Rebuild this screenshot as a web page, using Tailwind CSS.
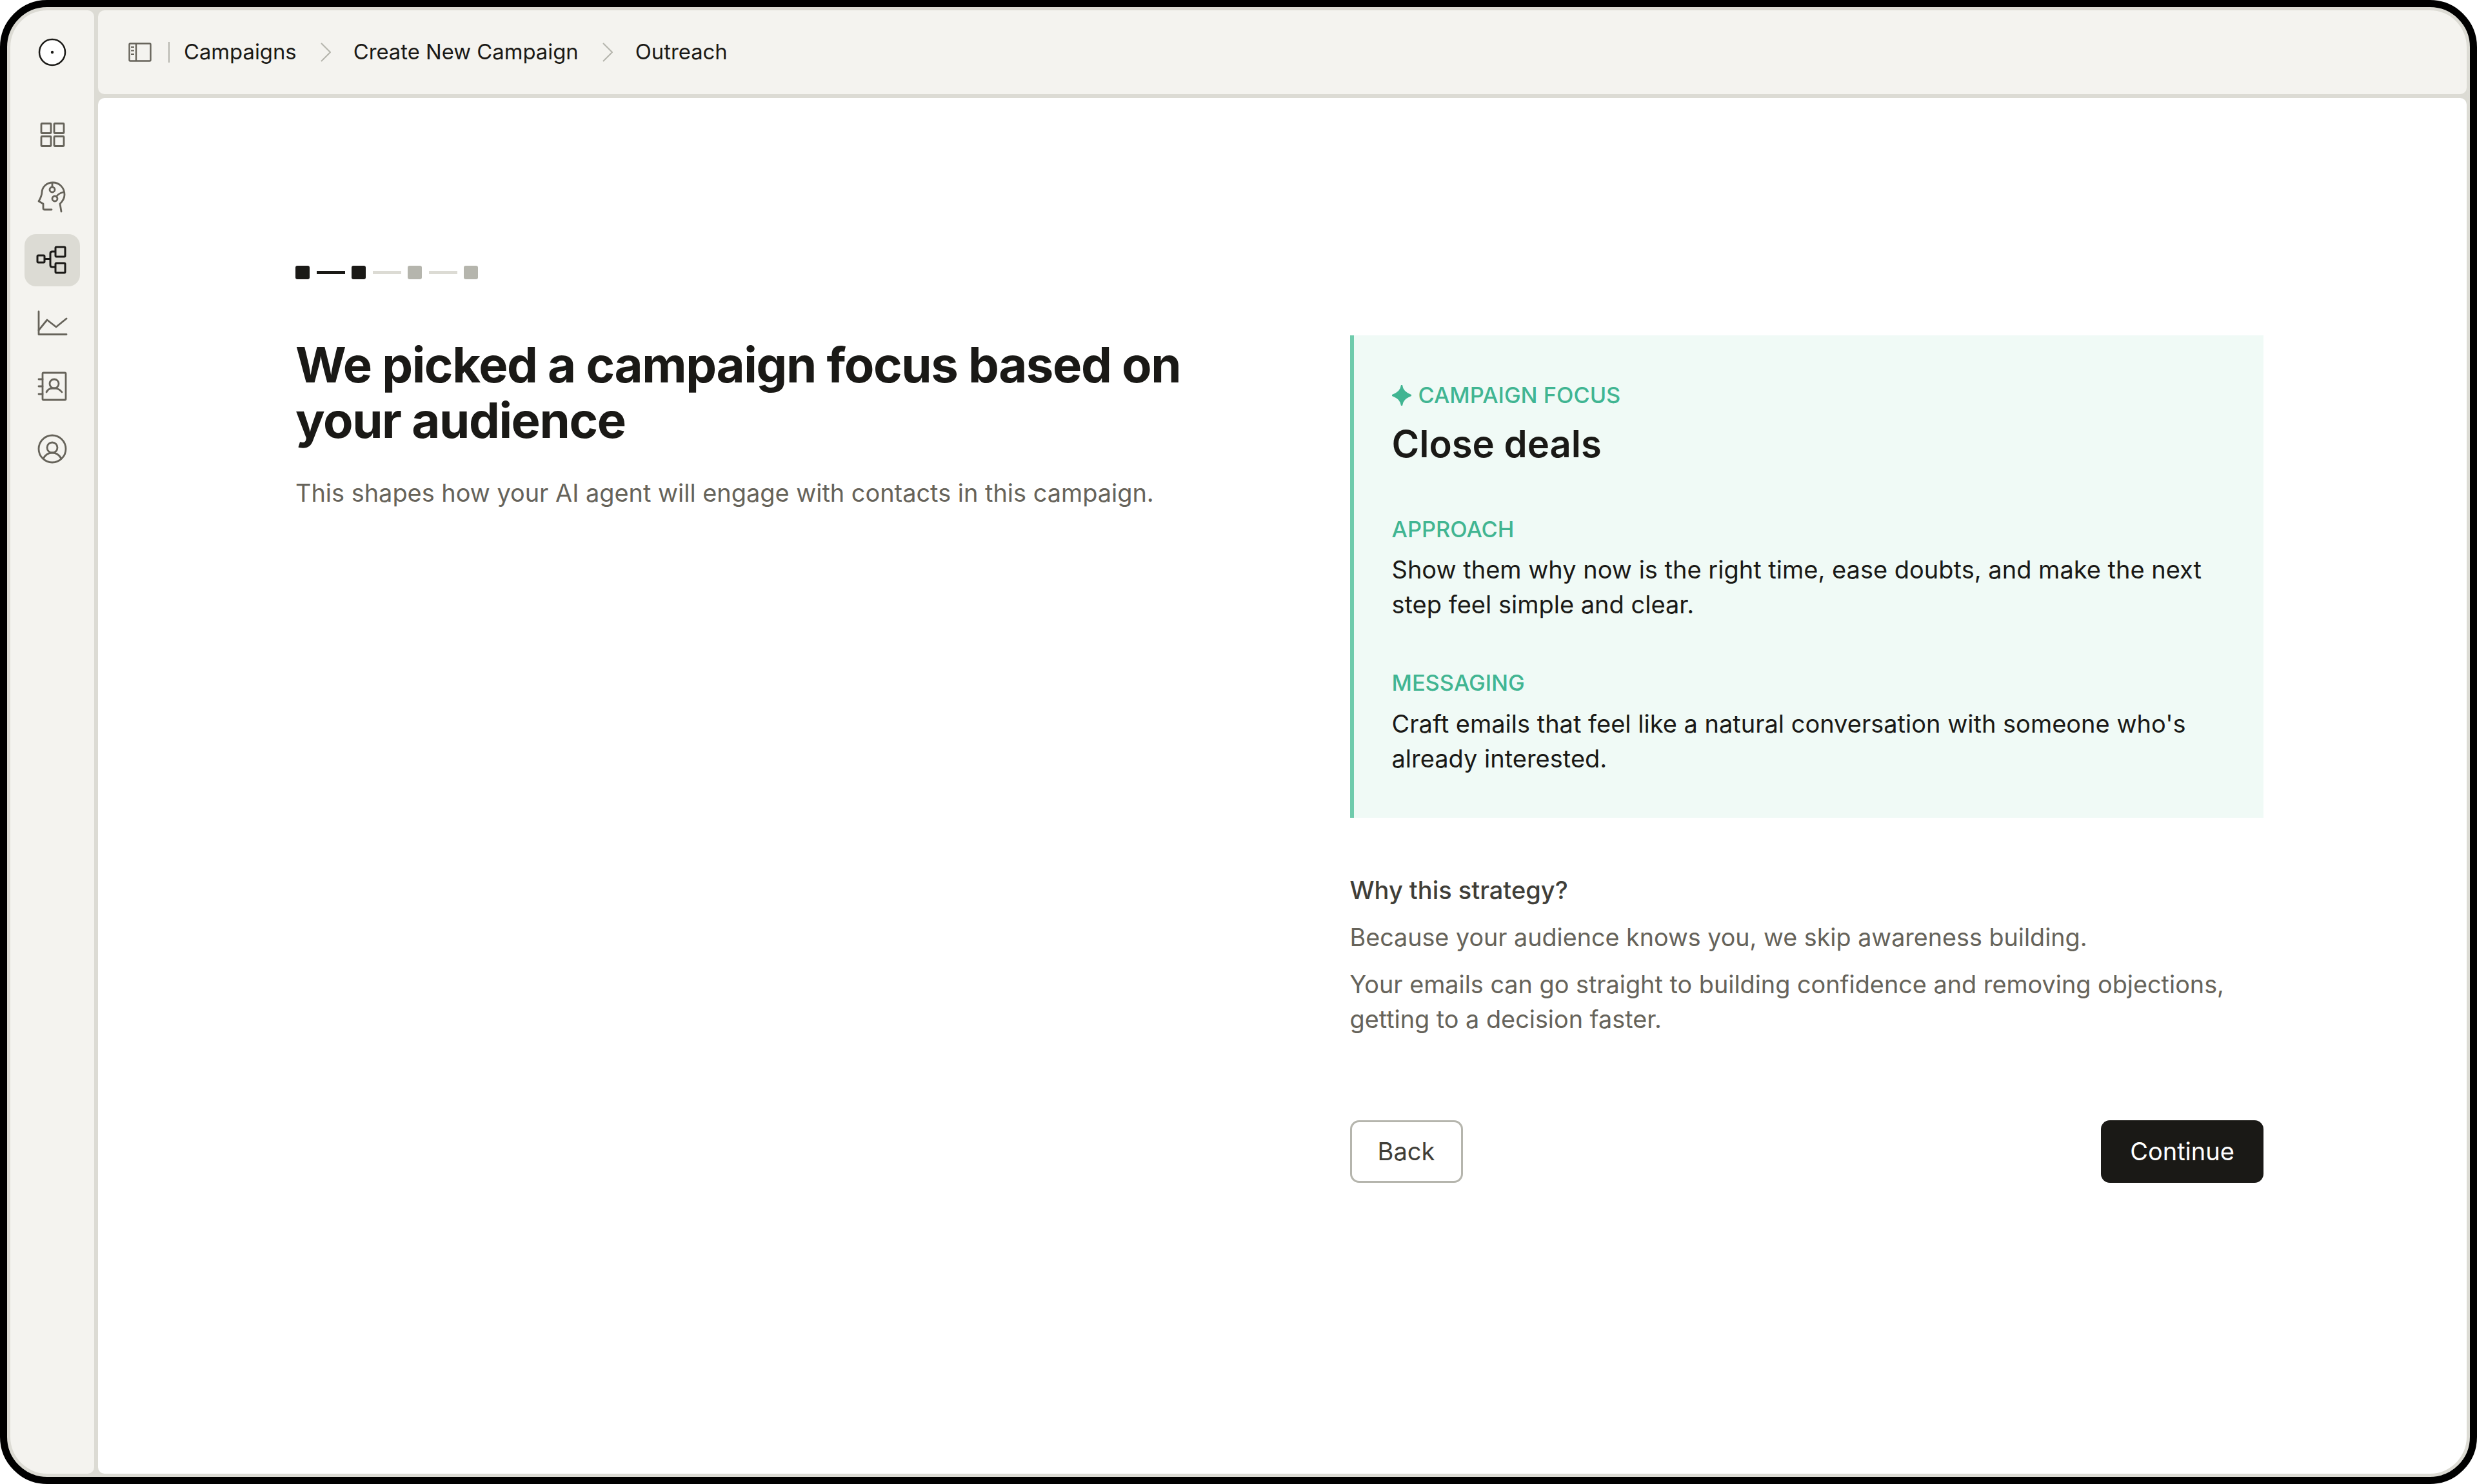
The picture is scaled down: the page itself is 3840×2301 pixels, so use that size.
<!DOCTYPE html>
<html lang="en">
<head>
    <meta charset="UTF-8">
    <title>Outreach</title>
    <script src="https://cdn.jsdelivr.net/npm/@tailwindcss/browser@4"></script>
</head>
<body class="bg-white font-['Inter',sans-serif]">
    <div class="flex h-[2301px] w-[3840px] gap-[6px] rounded-[73px] border-[11px] border-black bg-[#dcdbd4] p-[5px]">
        <!-- sidebar -->
        <aside class="flex w-[130px] shrink-0 flex-col items-center rounded-l-[57px] rounded-r-[10px] bg-[#f4f3ef] text-[#66635a]">
            <div class="flex h-[130px] w-full items-center justify-center">
                <svg width="44" height="44" viewBox="0 0 44 44"><circle cx="22" cy="22" r="20" fill="#fff" stroke="#1a1916" stroke-width="2.5"/><circle cx="22" cy="22" r="2.2" fill="#1a1916"/></svg>
            </div>
            <nav class="mt-[22px] flex flex-col gap-[16.5px]">
                <a class="flex h-[81px] w-[86px] items-center justify-center">
                    <svg width="40" height="40" viewBox="0 0 40 40" fill="none" stroke="currentColor" stroke-width="2.8" stroke-linejoin="round"><rect x="3" y="2.5" width="15" height="15" rx="1"/><rect x="23" y="2.5" width="15" height="15" rx="1"/><rect x="3" y="22.5" width="15" height="15" rx="1"/><rect x="23" y="22.5" width="15" height="15" rx="1"/></svg>
                </a>
                <a class="flex h-[81px] w-[86px] items-center justify-center">
                    <svg width="50" height="50" viewBox="0 0 50 50" fill="none" stroke="currentColor" stroke-width="2.8" stroke-linecap="round" stroke-linejoin="round"><path d="M39 47 L37 35 C41 31 44 27 44 21 C44 10 36 2 26 2 C16 2 9.5 9 9 17 C8.8 22 7 26 4 31 L11 35 V42 C11 43.5 12 44 13 44 H24"/><circle cx="25" cy="13" r="4"/><path d="M25 2.5 V9"/><circle cx="29" cy="27" r="4"/><path d="M31.5 24 C33 20 37 18.5 42 17"/></svg>
                </a>
                <a class="flex h-[81px] w-[86px] items-center justify-center rounded-[18px] bg-[#dcdbd4] text-[#1a1916]">
                    <svg width="50" height="46" viewBox="0 0 50 46" fill="none" stroke="currentColor" stroke-width="3" stroke-linejoin="round"><rect x="2" y="15" width="11" height="11" rx="1.5"/><rect x="30" y="2" width="15" height="15" rx="1.5"/><rect x="30" y="27" width="15" height="15" rx="1.5"/><path d="M13 20.5 H22 M30 9 H25 C23 9 22 10 22 12 V30 C22 32 23 33 25 33 H30"/></svg>
                </a>
                <a class="flex h-[81px] w-[86px] items-center justify-center">
                    <svg width="48" height="40" viewBox="0 0 48 40" fill="none" stroke="currentColor" stroke-width="2.8" stroke-linecap="round" stroke-linejoin="round"><path d="M3 2 V37.5 H46"/><path d="M3 31 L16 15 L30 26 L46 13"/></svg>
                </a>
                <a class="flex h-[81px] w-[86px] items-center justify-center">
                    <svg width="46" height="46" viewBox="0 0 46 46" fill="none" stroke="currentColor" stroke-width="2.8" stroke-linecap="round" stroke-linejoin="round"><rect x="8" y="2" width="36" height="42" rx="1.5"/><path d="M2 12 H8 M2 23 H8 M2 35 H8"/><circle cx="26" cy="19" r="7"/><path d="M14 32 C17 26 21 26 26 26 C31 26 34 27 38 32"/></svg>
                </a>
                <a class="flex h-[81px] w-[86px] items-center justify-center">
                    <svg width="46" height="46" viewBox="0 0 46 46" fill="none" stroke="currentColor" stroke-width="2.8" stroke-linecap="round"><circle cx="23" cy="23" r="21"/><circle cx="23" cy="21" r="8"/><path d="M9 38 C13 31 18 29 23 29 C28 29 33 31 37 38"/></svg>
                </a>
            </nav>
        </aside>

        <div class="flex min-w-0 flex-1 flex-col gap-[6px]">
            <!-- breadcrumb bar -->
            <header class="flex h-[130px] shrink-0 items-center rounded-[10px] rounded-tr-[57px] bg-[#f4f3ef] pl-[47px] text-[32.8px] text-[#1a1916]">
                <svg width="36" height="30" viewBox="0 0 36 30" fill="none" stroke="#66635a" stroke-width="2.4" stroke-linejoin="round"><rect x="1.5" y="1.5" width="33" height="27" rx="1.5"/><path d="M12 1.5 V28.5"/><path d="M4 7 H9 M4 12.5 H9 M4 18 H9" stroke-width="2"/></svg>
                <span class="ml-[26px] h-[32px] w-[2px] bg-[#b5b5ad]"></span>
                <span class="ml-[22px]">Campaigns</span>
                <svg class="ml-[37px]" width="16" height="30" viewBox="0 0 16 30" fill="none" stroke="#b5b5ad" stroke-width="2"><path d="M1 1 L15 15 L1 29"/></svg>
                <span class="ml-[35px]">Create New Campaign</span>
                <svg class="ml-[37px]" width="16" height="30" viewBox="0 0 16 30" fill="none" stroke="#b5b5ad" stroke-width="2"><path d="M1 1 L15 15 L1 29"/></svg>
                <span class="ml-[35px]">Outreach</span>
            </header>

            <!-- page -->
            <main class="min-h-0 flex-1 rounded-[10px] rounded-br-[57px] bg-white pt-[260px] pl-[306px] pr-[315px]">
                <div class="flex items-center gap-[10.5px]">
                    <span class="h-[21px] w-[22px] rounded-[3px] bg-[#1a1916]"></span>
                    <span class="h-[5px] w-[44px] bg-[#1a1916]"></span>
                    <span class="h-[21px] w-[22px] rounded-[3px] bg-[#1a1916]"></span>
                    <span class="h-[5px] w-[44px] bg-[#dcdbd4]"></span>
                    <span class="h-[21px] w-[22px] rounded-[3px] bg-[#b5b5ad]"></span>
                    <span class="h-[5px] w-[44px] bg-[#dcdbd4]"></span>
                    <span class="h-[21px] w-[22px] rounded-[3px] bg-[#b5b5ad]"></span>
                </div>

                <div class="mt-[87px] grid grid-cols-2 gap-[218px]">
                    <div>
                        <h1 class="pt-[2px] text-[76px] leading-[86px] font-bold tracking-[-1.4px] text-[#1a1916]">We picked a campaign focus based on your audience</h1>
                        <p class="mt-[43px] text-[37.9px] leading-[54px] text-[#66635a]">This shapes how your AI agent will engage with contacts in this campaign.</p>
                    </div>

                    <div>
                        <section class="h-[748px] border-l-[6px] border-[#6fcbac] bg-[#f0faf6] pt-[66px] pl-[59px] pr-[50px]">
                            <div class="flex items-center gap-[11px] text-[34.4px] leading-[54px] font-medium text-[#41b592]">
                                <svg width="30" height="32" viewBox="0 0 30 32" fill="#41b592"><path d="M15 0 C16 8 20 12 30 16 C20 20 16 24 15 32 C14 24 10 20 0 16 C10 12 14 8 15 0 Z" stroke="#41b592" stroke-width="2" stroke-linejoin="round"/></svg>
                                <span>CAMPAIGN FOCUS</span>
                            </div>
                            <h2 class="mt-[12px] text-[58px] leading-[72px] font-semibold text-[#1a1916]">Close deals</h2>
                            <div class="mt-[70px] text-[34.4px] leading-[54px] font-medium text-[#41b592]">APPROACH</div>
                            <p class="mt-[8px] text-[38px] leading-[54px] text-[#1a1916]">Show them why now is the right time, ease doubts, and make the next step feel simple and clear.</p>
                            <div class="mt-[68px] text-[34.4px] leading-[54px] font-medium text-[#41b592]">MESSAGING</div>
                            <p class="mt-[9px] text-[38px] leading-[54px] text-[#1a1916]">Craft emails that feel like a natural conversation with someone who's already interested.</p>
                        </section>

                        <h3 class="mt-[85px] text-[38px] leading-[54px] font-medium text-[#403e38]">Why this strategy?</h3>
                        <p class="mt-[19px] text-[37.7px] leading-[54px] text-[#66635a]">Because your audience knows you, we skip awareness building.</p>
                        <p class="mt-[19px] text-[37.8px] leading-[54px] text-[#66635a]">Your emails can go straight to building confidence and removing objections, getting to a decision faster.</p>

                        <div class="mt-[130px] flex items-center justify-between">
                            <button class="h-[97px] w-[175px] rounded-[14px] border-[3px] border-[#b5b5ad] bg-white text-[38px] text-[#403e38]">Back</button>
                            <button class="h-[97px] w-[252px] rounded-[14px] bg-[#1a1916] text-[38px] text-white">Continue</button>
                        </div>
                    </div>
                </div>
            </main>
        </div>
    </div>
</body>
</html>
